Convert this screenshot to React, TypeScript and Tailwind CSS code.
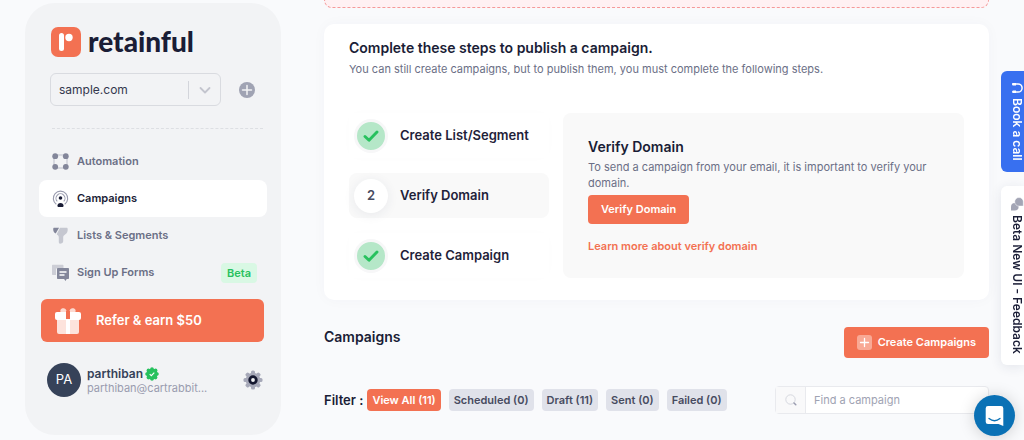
import React, { useState } from "react";

const filters = [
  "View All (11)",
  "Scheduled (0)",
  "Draft (11)",
  "Sent (0)",
  "Failed (0)",
];

function LogoMark() {
  return (
    <svg viewBox="0 0 30 30" className="size-[30px]" aria-hidden="true">
      <rect width="30" height="30" rx="7" fill="#f37152" />
      <rect x="8" y="6" width="5" height="18" rx="2.5" fill="#fff" />
      <circle cx="18" cy="10.500" r="3.700" fill="#fff" />
    </svg>
  );
}

function AutomationIcon() {
  return (
    <svg viewBox="0 0 17 17" className="size-[17px]" aria-hidden="true">
      <rect x="2" y="2" width="13" height="13" fill="none" stroke="#c9cbd4" strokeWidth="1.300" />
      <g fill="#83869a">
        <circle cx="3.200" cy="3.200" r="2.900" />
        <circle cx="13.800" cy="3.200" r="2.900" />
        <circle cx="3.200" cy="13.800" r="2.900" />
        <circle cx="13.800" cy="13.800" r="2.900" />
      </g>
    </svg>
  );
}

function CampaignIcon() {
  return (
    <svg viewBox="0 0 17 17" className="size-[17px]" fill="none" aria-hidden="true">
      <path d="M4.300 14.200A7.200 7.200 0 1 1 12.700 14.200" stroke="#9a9caf" strokeWidth="1.100" />
      <path d="M5.300 11.400A4.500 4.500 0 1 1 11.700 11.400" stroke="#9a9caf" strokeWidth="1.100" />
      <circle cx="8.500" cy="8" r="1.800" fill="#1a1d36" />
      <path d="M5.400 15.700c0-1.600 1.300-2.800 3.100-2.800s3.100 1.200 3.100 2.800c0 .9-.7 1.300-1.500 1.300H6.900c-.8 0-1.500-.4-1.500-1.300z" fill="#1a1d36" />
    </svg>
  );
}

function FunnelIcon() {
  return (
    <svg viewBox="0 0 17 17" className="size-[17px]" aria-hidden="true">
      <path d="M8 .8h6.500c1 0 1.200.7 1.200 1.500 0 2.500-.5 3.800-2.600 5.200-1.300.9-1.900 1.600-1.900 2.700V14c0 1.500-.9 2.300-2.200 2.600-1.200.3-2.200-.3-2.200-1.700v-4.500c0-1-.3-1.600-1.300-2.400L4.700 7.300z" fill="#c5c7d0" />
      <path d="M2.200.8h4.900L3.700 6.600C1.900 5.400 1.200 4 1.200 2.200c0-.8.2-1.400 1-1.400z" fill="#83869a" />
    </svg>
  );
}

function FormsIcon() {
  return (
    <svg viewBox="0 0 17 17" className="size-[17px]" aria-hidden="true">
      <path d="M1 .8h9.500c.6 0 1 .4 1 1V4H5.800C4.600 4 4 4.700 4 5.800V11H1c-.6 0-1-.4-1-1V1.800c0-.6.4-1 1-1z" fill="#cdced6" />
      <path d="M6 4h10c.6 0 1 .4 1 1v9c0 .6-.4 1-1 1h-1.300l-1.200 2-1.400-2H6c-.6 0-1-.4-1-1V5c0-.6.400-1 1-1z" fill="#83869a" />
      <path d="M7.500 8h7M7.500 11h5" stroke="#fff" strokeWidth="1.300" />
    </svg>
  );
}

function GiftIcon() {
  return (
    <svg viewBox="0 0 28 28" className="size-7" aria-hidden="true">
      <path d="M7 6C5 2.500 8 .8 10.500 1.500 12 2 12.700 3.500 12.700 6zM21 6c2-3.500-1-5.200-3.500-4.500C16 2 15.300 3.500 15.300 6z" fill="#fcd9d0" />
      <path d="M3 12h22v13a2 2 0 0 1-2 2H5a2 2 0 0 1-2-2z" fill="#fde3dc" />
      <rect x="1" y="5" width="26" height="8" rx="2" fill="#fff" />
      <path d="M12 4h4v8h-4z" fill="#f37152" />
      <path d="M12 12h4v15h-4z" fill="#fff" />
    </svg>
  );
}

function VerifiedIcon() {
  return (
    <svg viewBox="0 0 14 14" className="size-[14px]" aria-hidden="true">
      <g fill="#27c15e">
        <circle cx="7" cy="7" r="5.600" />
        <circle cx="7" cy="2" r="1.800" />
        <circle cx="10.600" cy="3.400" r="1.800" />
        <circle cx="12" cy="7" r="1.800" />
        <circle cx="10.600" cy="10.600" r="1.800" />
        <circle cx="7" cy="12" r="1.800" />
        <circle cx="3.400" cy="10.600" r="1.800" />
        <circle cx="2" cy="7" r="1.800" />
        <circle cx="3.400" cy="3.400" r="1.800" />
      </g>
      <path d="M4.700 7.200l1.600 1.500 3-3.100" fill="none" stroke="#fff" strokeWidth="1.100" />
    </svg>
  );
}

function GearIcon() {
  return (
    <svg viewBox="0 0 20 20" className="size-5" aria-hidden="true">
      <g fill="#a6a8b8">
        <circle cx="10" cy="10" r="7.300" />
        <rect x="8" y="0.500" width="4" height="19" rx="1.500" />
        <rect x="8" y="0.500" width="4" height="19" rx="1.500" transform="rotate(45 10 10)" />
        <rect x="8" y="0.500" width="4" height="19" rx="1.500" transform="rotate(90 10 10)" />
        <rect x="8" y="0.500" width="4" height="19" rx="1.500" transform="rotate(135 10 10)" />
      </g>
      <circle cx="10" cy="10" r="3.300" fill="#f1f2f4" stroke="#14172f" strokeWidth="2.800" />
    </svg>
  );
}

function HeadsetIcon() {
  return (
    <svg viewBox="0 0 12 12" className="size-3" fill="none" aria-hidden="true">
      <path d="M3.500 1.900H7a4.100 4.100 0 0 1 0 8.200H3.500" stroke="#fff" strokeWidth="1.500" />
      <path d="M1 1.900C1 1.300 1.500 1 2.100 1H5v2.600H2.600C1.600 3.600 1 2.900 1 1.900zM1 10.100c0 .6.500.9 1.100.9H5V8.400H2.600C1.600 8.400 1 9.100 1 10.100z" fill="#fff" />
    </svg>
  );
}

function ChatBubblesIcon() {
  return (
    <svg viewBox="0 0 14 14" className="size-[14px]" aria-hidden="true">
      <path d="M1 13.500V9.700a3.800 3.800 0 1 1 3.800 3.800z" fill="#a3a5b5" />
      <path d="M9 .5a4.300 4.300 0 0 1 4.300 4.300v4.300H9A4.300 4.300 0 0 1 9 .5z" fill="#a3a5b5" stroke="#fff" strokeWidth=".5" />
    </svg>
  );
}

const navItems = [
  { label: "Automation", icon: <AutomationIcon /> },
  { label: "Campaigns", icon: <CampaignIcon />, active: true },
  { label: "Lists & Segments", icon: <FunnelIcon /> },
  { label: "Sign Up Forms", icon: <FormsIcon />, badge: "Beta" },
];

function Sidebar() {
  return (
    <aside className="mt-[3px] flex w-64 shrink-0 flex-col self-start rounded-[30px] bg-[#f2f3f5] px-[14px] pt-6 pb-[38px]">
      <a href="#home" className="ml-3 flex items-start gap-[7px]">
        <LogoMark />
        <span className="font-['Lato',sans-serif] text-[28px] leading-7 font-black text-[#1a1d36]">
          retainful
        </span>
      </a>

      <div className="mt-4 ml-[11px] flex items-center gap-[18px]">
        <div className="flex h-[33px] w-[171px] items-center rounded-md border border-[#d9dbe0] pr-[7px]">
          <select
            aria-label="Store"
            className="h-full min-w-0 flex-1 appearance-none bg-transparent pl-2 text-xs text-[#34384e] outline-none"
          >
            <option>sample.com</option>
          </select>
          <span className="h-[18px] w-px bg-[#d3d5db]" />
          <svg viewBox="0 0 16 16" className="ml-2 size-4" fill="none" aria-hidden="true">
            <path d="M3.500 6L8 10.500 12.500 6" stroke="#c3c5ce" strokeWidth="1.800" strokeLinecap="round" strokeLinejoin="round" />
          </svg>
        </div>
        <button type="button" aria-label="Add store">
          <svg viewBox="0 0 16 16" className="size-4" aria-hidden="true">
            <circle cx="8" cy="8" r="8" fill="#a0a3b3" />
            <path d="M8 3.500v9M3.500 8h9" stroke="#f2f3f5" strokeWidth="1.500" strokeLinecap="round" />
          </svg>
        </button>
      </div>

      <hr className="mt-[22px] mr-1 ml-[13px] border-dashed border-[#dddfe3]" />

      <nav className="mt-[14px]">
        {navItems.map((item) => (
          <a
            key={item.label}
            href="#nav"
            aria-current={item.active ? "page" : undefined}
            className={
              item.active
                ? "flex h-[37px] items-center gap-2 rounded-lg bg-white px-[13px] text-[11px] font-semibold text-[#1a1d36]"
                : "flex h-[37px] items-center gap-2 px-[13px] text-[11px] font-semibold text-[#6b6f86]"
            }
          >
            {item.icon}
            <span className="flex-1">{item.label}</span>
            {item.badge && (
              <span className="mr-[-3px] rounded-sm bg-[#d9f8e4] px-1.5 text-[11px] leading-5 font-semibold text-[#27c15e]">
                {item.badge}
              </span>
            )}
          </a>
        ))}
      </nav>

      <button
        type="button"
        className="mt-2 mr-[3px] ml-[2px] flex h-[43px] items-center gap-[14px] rounded-md bg-[#f37152] px-[13px] text-[13px] font-semibold text-white"
      >
        <GiftIcon />
        Refer &amp; earn $50
      </button>

      <div className="mt-[21px] mr-1 ml-2 flex items-center">
        <span className="flex size-[34px] shrink-0 items-center justify-center rounded-full bg-[#364259] text-[13px] text-white">
          PA
        </span>
        <div className="ml-1.5 min-w-0 flex-1">
          <div className="flex items-center gap-0.5 text-xs leading-4 font-semibold text-[#364259]">
            parthiban
            <VerifiedIcon />
          </div>
          <div className="text-[11px] leading-3 whitespace-nowrap text-[#9a9caf]">
            parthiban@cartrabbit...
          </div>
        </div>
        <button type="button" aria-label="Settings">
          <GearIcon />
        </button>
      </div>
    </aside>
  );
}

function Step({ label, index, done }: { label: string; index: number; done?: boolean }) {
  return (
    <li
      className={
        done
          ? "flex h-[45px] items-center gap-3 rounded-lg px-[5px] shadow-[0_0_14px_rgba(0,0,0,0.010)]"
          : "flex h-[45px] items-center gap-3 rounded-lg bg-[#f9f9f9] px-[5px]"
      }
    >
      {done ? (
        <span className="flex size-[34px] items-center justify-center rounded-full border-3 border-[#f7f7f8] bg-[#b5e7c8]">
          <svg viewBox="0 0 16 16" className="size-4" fill="none" aria-label="Done">
            <path d="M2 8.500L6 12.200 14 4" stroke="#27c15e" strokeWidth="2.900" strokeLinecap="round" strokeLinejoin="round" />
          </svg>
        </span>
      ) : (
        <span className="flex size-[34px] items-center justify-center rounded-full bg-white text-[13px] font-semibold text-[#474b60] shadow-[0_2px_12px_rgba(40,50,90,0.08)]">
          {index}
        </span>
      )}
      <span className="text-[13px] font-semibold text-[#1f2239]">{label}</span>
    </li>
  );
}

export default function App() {
  const [active, setActive] = useState(0);
  return (
    <div className="flex min-h-screen gap-[43px] bg-[#f9fafc] pr-[35px] pl-[25px] font-['Inter',sans-serif]">
      <Sidebar />

      <main className="min-w-0 flex-1">
        <div className="h-2 rounded-b-lg border border-t-0 border-dashed border-[#f59a9a] bg-[#fff1f3]" />

        <section className="mt-4 rounded-[10px] bg-white px-[25px] pt-[14px] pb-[22px] shadow-[0_0_14px_rgba(60,70,110,0.03)]">
          <h2 className="text-sm leading-5 font-semibold text-[#1a1d36]">
            Complete these steps to publish a campaign.
          </h2>
          <p className="mt-px text-[11px] leading-5 text-[#6b6f86]">
            You can still create campaigns, but to publish them, you must complete the following steps.
          </p>
          <div className="mt-[34px] flex gap-[14px]">
            <ol className="flex w-[200px] shrink-0 flex-col gap-[15px]">
              <Step label="Create List/Segment" index={1} done />
              <Step label="Verify Domain" index={2} />
              <Step label="Create Campaign" index={3} done />
            </ol>
            <div className="min-w-0 flex-1 rounded-lg bg-[#f9f9f9] px-[25px] pt-6">
              <h3 className="text-sm leading-5 font-semibold text-[#1a1d36]">Verify Domain</h3>
              <p className="mt-0.5 text-[11px] leading-4 text-[#6b6f86]">
                To send a campaign from your email, it is important to verify your domain.
              </p>
              <button
                type="button"
                className="mt-1 block rounded-sm bg-[#f37152] px-[13px] text-[11px] leading-[29px] font-semibold text-white"
              >
                Verify Domain
              </button>
              <a
                href="#learn"
                className="mt-3 inline-block text-[11px] leading-5 font-semibold text-[#f37152]"
              >
                Learn more about verify domain
              </a>
            </div>
          </div>
        </section>

        <div className="mt-[27px] flex items-start justify-between">
          <h1 className="text-sm leading-5 font-semibold text-[#1a1d36]">Campaigns</h1>
          <button
            type="button"
            className="flex h-[31px] items-center gap-1.5 rounded-sm bg-[#f37152] px-[13px] text-[11px] font-semibold text-white"
          >
            <svg viewBox="0 0 15 15" className="size-[15px]" aria-hidden="true">
              <rect width="15" height="15" rx="3" fill="#f9a995" />
              <path d="M7.500 3.500v8M3.500 7.500h8" stroke="#fff" strokeWidth="1.300" strokeLinecap="round" />
            </svg>
            Create Campaigns
          </button>
        </div>

        <div className="mt-7 flex items-center">
          <span className="text-[13px] leading-4 font-semibold text-[#1a1d36]">Filter :</span>
          <div className="ml-1 flex gap-2">
            {filters.map((label, i) => (
              <button
                key={label}
                type="button"
                aria-pressed={i === active}
                onClick={() => setActive(i)}
                className={
                  i === active
                    ? "rounded-sm bg-[#f37152] px-[5px] text-[11px] leading-[22px] font-semibold text-white"
                    : "rounded-sm bg-[#e0e2ea] px-[5px] text-[11px] leading-[22px] font-semibold text-[#474b60]"
                }
              >
                {label}
              </button>
            ))}
          </div>
          <div className="ml-auto flex h-7 w-[214px] rounded-sm border border-[#e9eaee] bg-white">
            <span className="flex w-[30px] items-center justify-center border-r border-[#e9eaee] bg-[#f9f9fa]">
              <svg viewBox="0 0 12 12" className="size-3" fill="none" aria-hidden="true">
                <circle cx="5.500" cy="5.500" r="4.700" stroke="#d6d8df" strokeWidth="1" />
                <path d="M9 9l1.800 1.800" stroke="#9a9caf" strokeWidth="1.500" strokeLinecap="round" />
              </svg>
            </span>
            <input
              type="search"
              aria-label="Find a campaign"
              placeholder="Find a campaign"
              className="min-w-0 flex-1 px-2 text-[11px] outline-none placeholder:text-[#a0a3b3]"
            />
          </div>
        </div>
      </main>

      <div className="fixed top-[71px] right-0 flex flex-col gap-[14px]">
        <button
          type="button"
          className="flex h-[101px] w-[23px] flex-col items-center gap-1 rounded-l-md bg-[#3870f0] pt-[11px] pl-2 text-xs font-semibold text-white [&>svg]:shrink-0"
        >
          <HeadsetIcon />
          <span className="leading-4 whitespace-nowrap [writing-mode:vertical-rl]">Book a call</span>
        </button>
        <button
          type="button"
          className="flex h-[179px] w-[23px] flex-col items-center gap-1 rounded-l-md bg-white pt-[11px] pl-2 text-xs font-semibold text-[#1a1d36] shadow-[0_2px_12px_rgba(40,50,90,0.1)] [&>svg]:shrink-0"
        >
          <ChatBubblesIcon />
          <span className="leading-4 whitespace-nowrap [writing-mode:vertical-rl]">Beta New UI - Feedback</span>
        </button>
      </div>

      <button
        type="button"
        aria-label="Open chat"
        className="fixed right-[9px] bottom-1 flex size-[41px] items-center justify-center rounded-full bg-[#0a71b5] shadow-[0_1px_16px_rgba(0,0,0,0.18)]"
      >
        <svg viewBox="0 0 20 22" className="h-[22px] w-5" fill="none" aria-hidden="true">
          <path d="M3 1h13a2.300 2.300 0 0 1 2.300 2.300V21l-4.800-2H3a2.300 2.300 0 0 1-2.300-2.300V3.300A2.300 2.300 0 0 1 3 1z" fill="#fff" />
          <path d="M4 13.500c3.300 2.700 7.700 2.700 11 0" stroke="#0a71b5" strokeWidth="1.300" strokeLinecap="round" />
        </svg>
      </button>
    </div>
  );
}
